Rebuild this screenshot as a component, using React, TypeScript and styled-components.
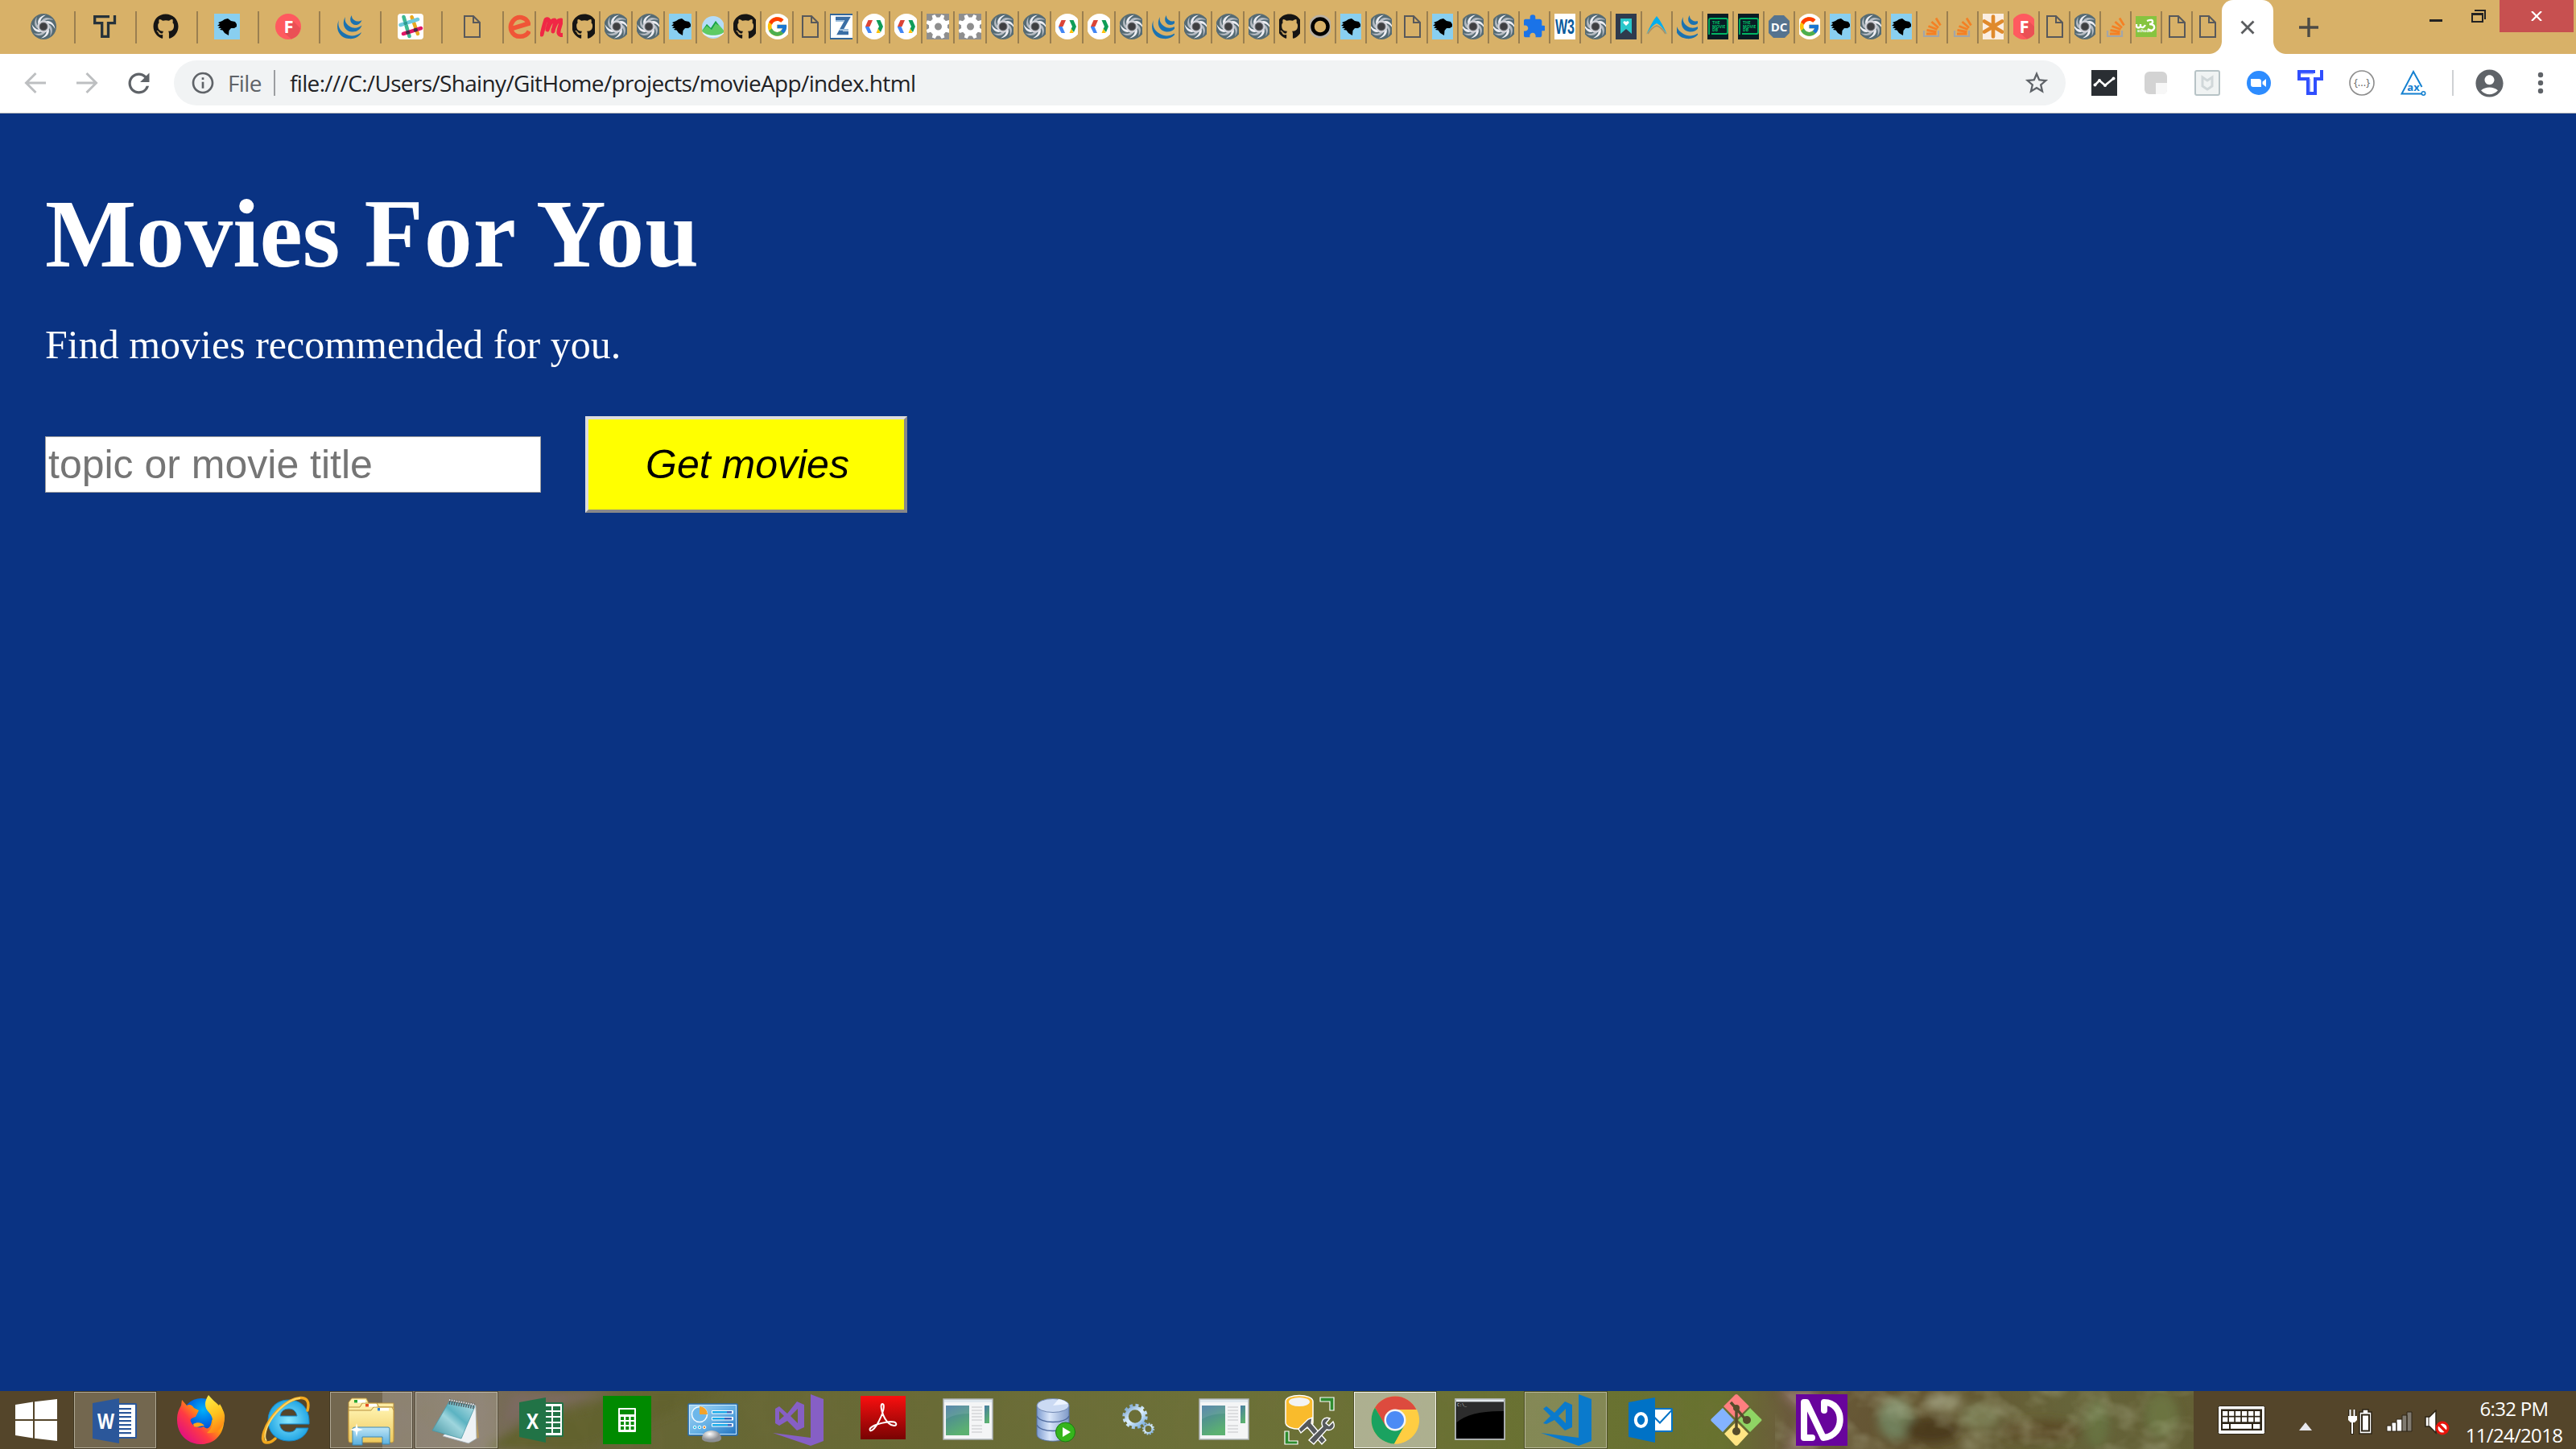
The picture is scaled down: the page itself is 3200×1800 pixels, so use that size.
import React from 'react';
import styled, { createGlobalStyle } from 'styled-components';
import { FaGithub } from 'react-icons/fa';
import { FcGoogle } from 'react-icons/fc';
import { MdExtension, MdRefresh, MdStarBorder, MdInfoOutline, MdAccountCircle } from 'react-icons/md';

const GlobalStyle = createGlobalStyle`
  html, body { margin: 0; padding: 0; background: #0a3383; overflow: hidden; }
  * { box-sizing: border-box; }
  svg { display: block; flex: none; }
`;

const uiFont = `'Open Sans', 'Noto Sans', sans-serif`;

const Screen = styled.div`
  width: 3200px;
  height: 1800px;
  display: flex;
  flex-direction: column;
  font-family: ${uiFont};
`;

/* ---------- tab strip ---------- */

const TabStrip = styled.header`
  height: 67px;
  flex: none;
  display: flex;
  align-items: flex-start;
  background: #d8b168;
  padding-left: 18px;
`;

const Tab = styled.div<{ $w: number; $pad: number; $last?: boolean }>`
  width: ${p => p.$w}px;
  height: 40px;
  margin-top: 14px;
  padding: 3px 0 0 ${p => p.$pad}px;
  flex: none;
  border-right: ${p => (p.$last ? 0 : 2)}px solid #9a7f50;
`;

const Favicon = styled.div<{ $w: number; $shift: number }>`
  width: ${p => p.$w}px;
  height: 32px;
  overflow: hidden;
  > svg { margin-left: ${p => -p.$shift}px; }
`;

const ActiveTab = styled.div`
  position: relative;
  width: 64px;
  height: 67px;
  flex: none;
  background: #fff;
  border-radius: 14px 14px 0 0;
  display: flex;
  align-items: center;
  justify-content: center;
  &::before, &::after {
    content: '';
    position: absolute;
    bottom: 0;
    width: 16px;
    height: 16px;
  }
  &::before { left: -16px; background: radial-gradient(circle at 0 0, transparent 15.5px, #fff 16.5px); }
  &::after { right: -16px; background: radial-gradient(circle at 100% 0, transparent 15.5px, #fff 16.5px); }
`;

const NewTab = styled.div`
  width: 88px;
  height: 67px;
  display: flex;
  align-items: center;
  justify-content: center;
`;

const WindowControls = styled.div`
  margin-left: auto;
  display: flex;
  align-items: flex-start;
  padding-right: 3px;
`;

const Control = styled.div<{ $w: number; $close?: boolean }>`
  width: ${p => p.$w}px;
  height: 40px;
  display: flex;
  align-items: center;
  justify-content: center;
  background: ${p => (p.$close ? '#c75050' : 'transparent')};
`;

/* ---------- toolbar ---------- */

const Toolbar = styled.nav`
  height: 74px;
  flex: none;
  display: flex;
  align-items: flex-start;
  background: #fff;
  border-bottom: 1px solid #b4b6ba;
  padding: 8px 0 0 12px;
`;

const ToolButton = styled.div<{ $w?: number }>`
  width: ${p => p.$w ?? 64}px;
  height: 56px;
  flex: none;
  display: flex;
  align-items: center;
  justify-content: center;
  color: #5f6368;
`;

const Omnibox = styled.div`
  width: 2350px;
  height: 56px;
  margin-left: 12px;
  border-radius: 28px;
  background: #f1f3f4;
  display: flex;
  align-items: center;
  padding: 0 19px 0 20px;
  color: #5f6368;
  font-size: 28px;
`;

const Scheme = styled.span`
  width: 57px;
  margin-left: 15px;
  letter-spacing: -0.6px;
`;

const Divider = styled.span<{ $color?: string }>`
  width: 2px;
  height: 32px;
  background: ${p => p.$color ?? '#9c9ea1'};
`;

const Address = styled.span`
  margin-left: 18px;
  flex: 1;
  color: #202124;
  letter-spacing: -0.66px;
`;

const Extensions = styled.div`
  display: flex;
  align-items: center;
  height: 56px;
  padding-left: 16px;
`;

/* ---------- page ---------- */

const Page = styled.main`
  flex: 1;
  background: #0a3383;
  color: #fff;
  padding: 80px 56px 0;
  font-family: 'Liberation Serif', 'Times New Roman', serif;
`;

const Title = styled.h1`
  margin: 0;
  font-size: 120px;
  line-height: 140px;
  font-weight: bold;
`;

const TitleTail = styled.span`
  letter-spacing: 0.9px;
`;

const Lead = styled.p`
  margin: 38px 0 60px;
  font-size: 50px;
  line-height: 58px;
`;

const SearchForm = styled.div`
  display: flex;
  align-items: center;
  gap: 55px;
`;

const SearchInput = styled.input`
  width: 616px;
  height: 70px;
  border: 1px solid #a0a0a0;
  border-radius: 0;
  padding: 0 3px;
  background: #fff;
  font: 50px 'Liberation Sans', Arial, sans-serif;
  outline: none;
  &::placeholder { color: #757575; opacity: 1; }
`;

const SearchButton = styled.button`
  width: 400px;
  height: 120px;
  padding: 0 0 0 3px;
  border: 4px solid;
  border-color: #dddddd #888888 #888888 #dddddd;
  border-radius: 0;
  background: #ffff00;
  color: #000;
  font: italic 50px 'Liberation Sans', Arial, sans-serif;
`;

/* ---------- taskbar ---------- */

const TaskbarRoot = styled.footer`
  position: relative;
  height: 72px;
  flex: none;
  display: flex;
  background: #54452a;
`;

const Wallpaper = styled.div`
  position: absolute;
  left: 475px;
  top: 0;
`;

const StartButton = styled.div`
  position: relative;
  width: 90px;
  display: flex;
  align-items: center;
  justify-content: center;
  margin-right: 2px;
`;

const TaskList = styled.div`
  position: relative;
  display: flex;
  gap: 4px;
  padding-top: 1px;
`;

const TaskButton = styled.div<{ $state?: 'open' | 'front' }>`
  width: 102px;
  height: 70px;
  display: flex;
  align-items: center;
  justify-content: center;
  border: 1px solid ${p => (p.$state === 'front' ? '#f2f2e8' : p.$state ? 'rgba(225,222,205,.55)' : 'transparent')};
  background: ${p => (p.$state === 'front' ? 'rgba(215,215,200,.62)' : p.$state ? 'rgba(220,215,205,.23)' : 'transparent')};
  box-shadow: ${p => (p.$state ? '0 0 0 1px rgba(40,35,20,.45)' : 'none')};
`;

const Tray = styled.div`
  position: relative;
  margin-left: auto;
  width: 475px;
  display: flex;
  align-items: center;
  padding-left: 30px;
  color: #fff;
`;

const TrayItem = styled.div<{ $w: number; $gap: number; $drop?: number }>`
  width: ${p => p.$w}px;
  margin-right: ${p => p.$gap}px;
  padding-top: ${p => p.$drop ?? 0}px;
`;

const Clock = styled.div`
  width: 140px;
  text-align: center;
  font-size: 24px;
  line-height: 33px;
  letter-spacing: -0.7px;
  padding-top: 4px;
`;

/* ---------- favicons, drawn on a 32 grid ---------- */

const Box32 = ({ children }: { children: React.ReactNode }) => (
  <svg width="32" height="32" viewBox="0 0 32 32">{children}</svg>
);

const Swirl = () => (
  <Box32>
    <circle cx="16" cy="16" r="16" fill="#566b74" />
    {[0, 45, 90, 135, 180, 225, 270, 315].map(a => (
      <path key={a} transform={`rotate(${a} 16 16)`} d="M10.500 15C7 10 10 3 19 1.500C14 4.500 11 8.500 13 12Z" fill={a % 90 ? '#b4bac1' : '#efeff4'} />
    ))}
    <circle cx="16" cy="16" r="6.200" fill="none" stroke="#d5d6dd" strokeWidth="2.400" />
    <circle cx="16" cy="16" r="5" fill="#3f3f42" stroke="#777b80" strokeWidth="1" />
  </Box32>
);

const TLogo = ({ color = '#26323a' }: { color?: string }) => (
  <Box32>
    <path d="M22 3.700H3.700V13M2 11.700H12.700V28.300H20.500V11.700H28.500V2" fill="none" stroke={color} strokeWidth="3.300" />
  </Box32>
);

const GitHub = () => <FaGithub size={32} color="#161514" />;

const Lion = () => (
  <Box32>
    <rect width="32" height="32" fill="#89cff0" />
    <path d="M5 11L10 9L13 7L17 6L21 9L26 10L28 13L28 16L25 18L21 18L18.500 21L18 27L13 24L10.500 20.500L7 20L9 18L5 18L7.500 15.500L4 15L7 12.500Z" fill="#000" />
  </Box32>
);

const FLogo = () => (
  <Box32>
    <circle cx="16" cy="16" r="16" fill="#ff5a5f" />
    <path d="M21 8L31 18A16 16 0 0 1 20 31.500L11 24Z" fill="#ea5055" />
    <text x="16.500" y="24" textAnchor="middle" fontFamily="Open Sans, sans-serif" fontWeight="700" fontSize="22" fill="#fff">F</text>
  </Box32>
);

const JQuery = () => (
  <Box32>
    <g fill="#1b72b0">
      <path d="M3 8C-2 18 3 30 15 31C23 32 29 28 31 23C25 28 17 29 11 25C4 21 1 15 3 8Z" />
      <path d="M11 4C6 12 10 22 19 22.500C26 23 30 19 31.500 14.500C27 18 21 19 16 15.500C11 12 10 8 11 4Z" />
      <path d="M19 2C15 7 18 14 24 14C28 14 30 11.500 31.500 8C28 10 25 10 22 8C19 6 19 4 19 2Z" />
    </g>
  </Box32>
);

const Slack = () => (
  <Box32>
    <rect width="32" height="32" rx="4" fill="#fff" />
    <g fill="none" strokeWidth="4.500" strokeLinecap="round">
      <path d="M7.500 4L14.500 28" stroke="#3eb991" />
      <path d="M17.500 4L25 25" stroke="#e9a820" />
      <path d="M3.500 14L25 7" stroke="#6ecadc" />
      <path d="M7 25L29 18" stroke="#e01765" />
      <path d="M12.400 23.300L13 23.100M22 20.200L22.600 20" stroke="#472a49" />
      <path d="M9.500 12L10 11.800" stroke="#2d9c8f" />
    </g>
  </Box32>
);

const FileIcon = () => (
  <Box32>
    <path d="M7 3H18L26 11V29H7ZM18 3V11H26" fill="none" stroke="#58595b" strokeWidth="2" />
  </Box32>
);

const ELogo = () => (
  <Box32>
    <path d="M4 19L27 12C24 3 13 1 7 8C0 17 5 29 16 29C22 29 26 26 28 22" fill="none" stroke="#f05537" strokeWidth="6" transform="translate(1 1) scale(.94)" />
  </Box32>
);

const MLogo = () => (
  <Box32>
    <path d="M3 26C5 18 6 13 8 7.500C10 6 13 7 12 12L10 19M10 20C13 12 15 8 19 8C21 10 18 15 17 22M17 20C20 12 23 7 27 8C28 12 23 19 24 24C25 27 28 27 30 26" fill="none" stroke="#f02745" strokeWidth="5" strokeLinecap="round" strokeLinejoin="round" />
  </Box32>
);

const Basecamp = () => (
  <Box32>
    <circle cx="16" cy="17" r="14" fill="#b4dcf8" />
    <path d="M2 21L8 13L13 18L19 9L30 22C27 28 6 29 2 21Z" fill="#5ecb63" />
    <path d="M8 13L13 18L19 9L23 15L19 12L14 20L8 15L3 21" fill="#14a04a" />
    <path d="M2 22C7 29 26 29 30 22C29 31 4 32 2 22Z" fill="#e8f6ff" />
  </Box32>
);

const Google = () => (
  <Box32>
    <circle cx="16" cy="16" r="16" fill="#fff" />
    <g transform="translate(1.500 2)"><FcGoogle size={28} /></g>
  </Box32>
);

const ZLogo = () => (
  <Box32>
    <rect x="1" y="1" width="30" height="30" fill="#fff" stroke="#336699" strokeWidth="2" />
    <path d="M8 6H23L13 24H24" fill="none" stroke="#3a6ea5" strokeWidth="4.500" />
    <path d="M8 9H18M13 20H24" stroke="#9fc0df" strokeWidth="2" />
  </Box32>
);

const DevLogo = () => (
  <Box32>
    <circle cx="16" cy="16" r="16" fill="#fff" />
    <path d="M8.500 8H14L10.500 16H5Z" fill="#db4437" />
    <path d="M5 16H9.500L13 24H8.500L5 17Z" fill="#4285f4" />
    <path d="M18.500 8H23.500L27 16L24 23L20.500 19L22 16Z" fill="#0f9d58" />
    <path d="M18.500 24L20.800 18.500L23.700 24Z" fill="#ffc107" />
  </Box32>
);

const GearBox = () => (
  <Box32>
    <rect width="32" height="32" fill="#8e8e8e" />
    <circle cx="15.500" cy="16" r="8" fill="none" stroke="#fff" strokeWidth="7" />
    {[0, 45, 90, 135, 180, 225, 270, 315].map(a => (
      <path key={a} d="M12.500 7L13.500 .5H17.500L18.500 7Z" fill="#fff" transform={`rotate(${a + 22} 15.500 16)`} />
    ))}
  </Box32>
);

const Ring = () => (
  <Box32>
    <circle cx="16" cy="16" r="12.500" fill="none" stroke="#b9b0a2" strokeWidth="4" />
    <circle cx="16" cy="16" r="9.500" fill="none" stroke="#000" strokeWidth="4.500" />
  </Box32>
);

const Puzzle = () => <MdExtension size={32} color="#1a73e8" />;

const W3 = () => (
  <Box32>
    <rect width="32" height="32" fill="#fff" />
    <text x="4" y="25" fontFamily="Liberation Sans, sans-serif" fontWeight="700" fontSize="25" textLength="24" lengthAdjust="spacingAndGlyphs" fill="#0a5a9c">W3</text>
  </Box32>
);

const Bookmark = () => (
  <Box32>
    <rect width="32" height="32" fill="#2f3a4d" />
    <path d="M9 6H23V25L16 19L9 25Z" fill="#29c7cb" />
    <path d="M16 15L12.500 11.500C12 9 15 8.500 16 10.500C17 8.500 20 9 19.500 11.500Z" fill="#fff" />
  </Box32>
);

const Caret = () => (
  <Box32>
    <path d="M3 26C7 17 11 9 16 3C21 9 25 17 29 26C25 20 21 14 16 12C11 14 7 20 3 26Z" fill="#00aef0" />
    <path d="M5 25C9 19 12 16 16 15C20 16 23 19 27 25" fill="none" stroke="#a38f6c" strokeWidth="1.500" />
  </Box32>
);

const MovieDb = () => (
  <Box32>
    <rect width="32" height="32" fill="#081c24" />
    <path d="M5 20V8Q5 6 7 6H26Q28 6 28 8V23Q28 25 26 25H8M5 20V26" fill="none" stroke="#01b463" strokeWidth="1.800" />
    <g fontFamily="Open Sans, sans-serif" fontWeight="700" fontSize="5" fill="#01c46a">
      <text x="9" y="13">THE</text>
      <text x="9" y="17.500">MOVIE</text>
      <text x="9" y="22">DB</text>
    </g>
  </Box32>
);

const DcLogo = () => (
  <Box32>
    <path d="M10 2H22L29 9V24L23 30H9L3 24V9Z" fill="#55738f" />
    <text x="16" y="22" textAnchor="middle" fontFamily="Open Sans, sans-serif" fontWeight="700" fontSize="15" fill="#fff">DC</text>
  </Box32>
);

const StackOverflow = () => (
  <Box32>
    <path d="M6 21V28H24V21" fill="none" stroke="#a3a5a8" strokeWidth="2.200" />
    <path d="M9 25H21.500M9.500 20.500L21.500 22.500M11.500 15.500L22.500 19.500M15.500 10L24 17.500M21 5.500L26.500 14.500" stroke="#f48024" strokeWidth="2.800" />
  </Box32>
);

const Asterisk = () => (
  <Box32>
    <rect width="32" height="32" fill="#fbeee2" />
    <path d="M16 3.500V28.500M5 9.500L27 22.500M27 9.500L5 22.500" stroke="#e08a2c" strokeWidth="4.600" strokeLinecap="round" />
    <circle cx="16" cy="16" r="4" fill="#e08a2c" />
  </Box32>
);

const W3Schools = () => (
  <Box32>
    <rect x="3" y="3" width="26" height="26" fill="#86c440" />
    <path d="M4 13V16Q6 19 9 16V13M9 16Q12 19 15 14M17 9Q25 6 24 11Q23 13 20 13Q27 13 26 18Q24 23 18 19" fill="none" stroke="#fff" strokeWidth="2.400" />
    <text x="5" y="23" fontFamily="Open Sans, sans-serif" fontSize="5" fontWeight="700" fill="#fff">schools</text>
  </Box32>
);

const icons = {
  swirl: Swirl, t: TLogo, gh: GitHub, lion: Lion, f: FLogo, jq: JQuery, slack: Slack, file: FileIcon,
  e: ELogo, m: MLogo, base: Basecamp, g: Google, z: ZLogo, dev: DevLogo, gear: GearBox, ring: Ring,
  puzzle: Puzzle, w3: W3, book: Bookmark, caret: Caret, tmdb: MovieDb, dc: DcLogo, so: StackOverflow,
  ast: Asterisk, w3s: W3Schools,
};
type IconName = keyof typeof icons;

const wideTabs: IconName[] = ['swirl', 't', 'gh', 'lion', 'f', 'jq', 'slack', 'file'];
const narrowTabs: IconName[] = ['e', 'm', 'gh', 'swirl', 'swirl', 'lion', 'base', 'gh', 'g', 'file', 'z', 'dev', 'dev',
  'gear', 'gear', 'swirl', 'swirl', 'dev', 'dev', 'swirl', 'jq', 'swirl', 'swirl'];
const tinyTabs: IconName[] = ['swirl', 'gh', 'ring', 'lion', 'swirl', 'file', 'lion', 'swirl', 'swirl', 'puzzle', 'w3',
  'swirl', 'book', 'caret', 'jq', 'tmdb', 'tmdb', 'dc', 'g', 'lion', 'swirl', 'lion', 'so', 'so', 'ast', 'f', 'file',
  'swirl', 'so', 'w3s', 'file', 'file'];

const TabGroup = ({ names, w, pad, icon, shift, end }: {
  names: IconName[]; w: number; pad: number; icon: number; shift: number; end?: boolean;
}) => (
  <>
    {names.map((n, i) => {
      const Icon = icons[n];
      const last = end && i === names.length - 1;
      return (
        <Tab key={i} $w={last ? w - 2 : w} $pad={pad} $last={last}>
          <Favicon $w={icon} $shift={shift}><Icon /></Favicon>
        </Tab>
      );
    })}
  </>
);

/* ---------- toolbar extension icons ---------- */

const ChartExt = () => (
  <Box32>
    <rect width="32" height="32" fill="#2a2e33" />
    <path d="M4 19L10 13L17 19L28 10" fill="none" stroke="#fff" strokeWidth="2.500" />
    <g fill="#fff"><circle cx="4.500" cy="18.500" r="2" /><circle cx="10" cy="13" r="2" /><circle cx="17" cy="19" r="2" /><circle cx="27.500" cy="10.500" r="2" /></g>
  </Box32>
);
const NoteExt = () => (
  <Box32>
    <rect x="2" y="2" width="28" height="28" rx="6" fill="#d3d3d3" />
    <path d="M16 16H30V25Q30 30 25 30H16Z" fill="#f7f7f7" />
  </Box32>
);
const ShieldExt = () => (
  <Box32>
    <rect x="1" y="1" width="30" height="30" rx="2" fill="#f0f3f3" stroke="#b7c3c6" strokeWidth="2" />
    <path d="M10 9L16 13L22 9V20L16 24L10 20Z" fill="none" stroke="#d0d7d9" strokeWidth="3" />
  </Box32>
);
const CameraExt = () => (
  <Box32>
    <circle cx="16" cy="16" r="15" fill="#2d8cff" />
    <path d="M6 11H16Q19 11 19 14V21H9Q6 21 6 18ZM20.500 14.500L25 11V21L20.500 17.500Z" fill="#fff" />
  </Box32>
);
const TypeExt = () => (
  <Box32>
    <path d="M22 2H2V11H13V29H22V11H30V0" fill="none" stroke="#304ffe" strokeWidth="4" />
    <path d="M4 4.500H20M15.500 11V27" stroke="#a3b1ff" strokeWidth="1.500" />
  </Box32>
);
const BracesExt = () => (
  <Box32>
    <circle cx="16" cy="16" r="15" fill="#fff" stroke="#8c8c8c" strokeWidth="1.600" />
    <text x="6" y="20" fontFamily="Open Sans, sans-serif" fontSize="13" textLength="20" fill="#666">{'{...}'}</text>
  </Box32>
);
const AxExt = () => (
  <Box32>
    <path d="M26.500 21L16 2L1.500 29.500H26" fill="none" stroke="#1480d0" strokeWidth="2" />
    <circle cx="28.500" cy="29" r="2.200" fill="#fff" stroke="#1480d0" strokeWidth="1.600" />
    <text x="16" y="26" textAnchor="middle" fontFamily="Open Sans, sans-serif" fontWeight="700" fontSize="13" fill="#1480d0">ax</text>
  </Box32>
);

/* ---------- taskbar icons, drawn on a 64 grid ---------- */

const Box64 = ({ children }: { children: React.ReactNode }) => (
  <svg width="64" height="64" viewBox="0 0 64 64">{children}</svg>
);

const Letter = ({ c, w }: { c: string; w: number }) => (
  <text x={20.5 - w / 2} y="43" fontFamily="Open Sans, sans-serif" fontWeight="700" fontSize="26" textLength={w} lengthAdjust="spacingAndGlyphs" fill="#fff">{c}</text>
);

const Word = () => (
  <Box64>
    <rect x="34" y="11" width="25" height="44" rx="1.500" fill="#2b579a" />
    <rect x="36" y="13" width="21" height="40" fill="#fff" />
    {[17, 22, 27, 32, 37, 42, 47].map(y => <rect key={y} x="36" y={y} width="16" height="2.200" fill="#2b579a" />)}
    <path d="M4 11L37 5V61L4 55Z" fill="#2b579a" />
    <Letter c="W" w={21} />
  </Box64>
);

const Firefox = () => (
  <Box64>
    <defs>
      <linearGradient id="ffBody" x1="0.9" y1="0.1" x2="0.15" y2="0.8">
        <stop offset="0" stopColor="#ffd52e" /><stop offset=".4" stopColor="#ff9a0d" /><stop offset=".68" stopColor="#ff3b42" /><stop offset="1" stopColor="#e5157a" />
      </linearGradient>
      <radialGradient id="ffGlobe" cx=".55" cy=".3" r=".7"><stop offset="0" stopColor="#00b2fb" /><stop offset=".6" stopColor="#0060df" /><stop offset="1" stopColor="#321c80" /></radialGradient>
      <linearGradient id="ffTail" x1="0" y1="0" x2="0.3" y2="1"><stop offset="0" stopColor="#fff14a" /><stop offset=".6" stopColor="#ffc21e" /><stop offset="1" stopColor="#ff8a16" /></linearGradient>
    </defs>
    <circle cx="33" cy="29" r="24" fill="url(#ffGlobe)" />
    <path d="M9 7L15 14Q20 11 24 17L30 20L26 28Q18 30 20 34C24 43 33 42 36 40C40 45 45 42 46 33L56 12C63 22 63 36 58 47C52 58 43 62 32 62C15 62 3 49 3 32C3 22 6 18 8 14Z" fill="url(#ffBody)" />
    <path d="M42 1C36 10 37 17 43 23C50 31 48 42 40 48C55 50 63 39 62 26C61 16 51 12 42 1Z" fill="url(#ffTail)" />
    <path d="M23 37C28 34 34 35 37 39C31 39 29 42 24 40Z" fill="#ffa41b" />
  </Box64>
);

const Explorer = () => (
  <Box64>
    <defs><radialGradient id="ie"><stop offset="0" stopColor="#8be9ff" /><stop offset="1" stopColor="#25a7e4" /></radialGradient></defs>
    <path d="M36 7C20 7 10 18 10 33C10 48 21 58 36 58C48 58 57 52 60 42H45C43 46 40 47 36 47C29 47 25 43 24.500 37H61C62 19 52 7 36 7ZM25 27C26 21 30 18 36 18C42 18 45 22 46 27Z" fill="url(#ie)" stroke="#1787c9" strokeWidth="1" />
    <path d="M59 20C65 -3 41 2 23 19C6 36 -3 61 9 60C12 60 16 58 19 55" fill="none" stroke="#f2a81d" strokeWidth="3.400" strokeLinecap="round" />
    <path d="M50 5C37 5 22 19 14 31C7 42 4 54 8 58" fill="none" stroke="#ffd768" strokeWidth="2" />
  </Box64>
);

const Folders = () => (
  <Box64>
    <defs>
      <linearGradient id="fold" x1="0" y1="0" x2="0" y2="1"><stop offset="0" stopColor="#fff3b0" /><stop offset="1" stopColor="#eec95d" /></linearGradient>
      <linearGradient id="foldBase" x1="0" y1="0" x2="0" y2="1"><stop offset="0" stopColor="#bfe6f6" /><stop offset="1" stopColor="#58aede" /></linearGradient>
    </defs>
    <g fill="url(#fold)" stroke="#b78f3c" strokeWidth="1">
      <path d="M4 10L8 5H26L29 11H60V54H4Z" />
      <path d="M4 16H18L21 11H39L42 16H60V56H4Z" />
      <path d="M4 20H32L35 16H58L60 20V58Q60 60 58 60H6Q4 60 4 58Z" />
    </g>
    <rect x="11" y="7" width="14" height="3.500" fill="#fff" /><rect x="11" y="7" width="4" height="3.500" fill="#29a52f" />
    <rect x="25" y="12" width="14" height="3.500" fill="#fff" /><rect x="25" y="12" width="4" height="3.500" fill="#e8501f" />
    <rect x="40" y="17" width="14" height="3.500" fill="#fff" /><rect x="40" y="17" width="3" height="3.500" fill="#3284d8" />
    <path d="M9 63V43Q9 41 12 41H53Q55 41 55 43V62H46V53H21V63Z" fill="url(#foldBase)" stroke="#3d88b5" strokeWidth="1" />
    <path d="M14 36L15.500 42L22 44L15.500 46L14 53L12.500 46L6 44L12.500 42Z" fill="#fff" />
  </Box64>
);

const Notepad = () => (
  <Box64>
    <defs><linearGradient id="pad" x1="0" y1="1" x2="1" y2="0"><stop offset="0" stopColor="#3d8e9c" /><stop offset=".45" stopColor="#9ed5dd" /><stop offset=".6" stopColor="#5cb3c2" /><stop offset="1" stopColor="#bfe4ea" /></linearGradient></defs>
    <path d="M56 14L60 54L54 56Z" fill="#b79a5e" />
    <path d="M50 12L56 14L57 55L47 61L15 52L20 46Z" fill="#eef2f5" stroke="#9fabb3" strokeWidth=".8" />
    <path d="M23 9L55 15L38 55L2 45Z" fill="url(#pad)" stroke="#4a98a6" strokeWidth=".8" />
    <path d="M23 9L55 15" stroke="#4c5a60" strokeWidth="7" strokeDasharray="1.500 1.500" />
    <path d="M23 7L55 13" stroke="#dfe5e8" strokeWidth="2" strokeDasharray="1.500 1.500" />
  </Box64>
);

const Excel = () => (
  <Box64>
    <rect x="34" y="10" width="25" height="43" rx="1.500" fill="#217346" />
    <rect x="36" y="12" width="21" height="39" fill="#fff" />
    {[15, 22, 29, 36, 43].map(y => (
      <g key={y} fill="#217346"><rect x="37" y={y} width="7" height="5" /><rect x="46" y={y} width="9" height="5" /></g>
    ))}
    <path d="M4 10L37 4V60L4 53Z" fill="#217346" />
    <Letter c="X" w={15} />
  </Box64>
);

const Calculator = () => (
  <Box64>
    <rect x="2" y="2" width="60" height="60" fill="#008a00" />
    <rect x="21" y="17" width="22" height="30" rx="1" fill="#fff" />
    <rect x="23" y="19" width="18" height="6" fill="#008a00" />
    {[28, 34, 40].map(y => [24, 30.300, 36.600].map(x => <rect key={`${x}${y}`} x={x} y={y} width="4" height="4" fill="#008a00" />))}
  </Box64>
);

const ControlPanel = () => (
  <Box64>
    <defs>
      <linearGradient id="cp" x1="0" y1="0" x2="1" y2="1"><stop offset="0" stopColor="#a8d8f6" /><stop offset=".55" stopColor="#62aee4" /><stop offset="1" stopColor="#1f6fbd" /></linearGradient>
      <radialGradient id="knob" cx=".4" cy=".3"><stop offset="0" stopColor="#fff" /><stop offset="1" stopColor="#8d9094" /></radialGradient>
    </defs>
    <rect x="2" y="12" width="61" height="39" rx="1" fill="url(#cp)" stroke="#2c6fae" strokeWidth="1.500" />
    <rect x="3.500" y="13.500" width="58" height="36" fill="none" stroke="#cbeaff" strokeWidth="1" />
    <circle cx="16" cy="25" r="9.500" fill="#6db7ea" stroke="#f2faff" strokeWidth="1.500" />
    <path d="M16 25V15A10 10 0 0 1 26 25Z" fill="#f2a32c" />
    {[20, 28, 36].map((y, i) => (
      <g key={y}><rect x="31" y={y} width="27" height="4.500" rx="1" fill="#fff" /><rect x="32" y={y + 1} width={[18, 15, 19][i]} height="2.500" fill="#16a8e8" /><rect x={[50, 47, 51][i]} y={y + 1} width={[6, 9, 5][i]} height="2.500" fill="#3a62b8" /></g>
    ))}
    <g stroke="#fff" strokeWidth="1"><circle cx="10" cy="41" r="1.800" fill="#23c4ea" /><circle cx="16" cy="41" r="1.800" fill="#23c4ea" /><circle cx="22" cy="41" r="1.800" fill="#ee8b25" /></g>
    <path d="M19 55C19 48 25 45 31 45C38 45 43 49 43 55C43 61 19 61 19 55Z" fill="url(#knob)" />
  </Box64>
);

const VisualStudio = () => (
  <Box64>
    <path fillRule="evenodd" d="M48 0L64 6V58L48 64L1 48L48 54ZM4 18L9 15L19 24L31 9L40 13V41L31 45L19 33L9 39L4 36ZM9 21V32L15 27ZM32 18L23 27L32 36Z" fill="#865fc5" />
  </Box64>
);

const Code = () => (
  <Box64>
    <path fillRule="evenodd" d="M48 0L64 6V58L48 64L1 48L48 54ZM4 18L8 15L18 23L31 9L40 13V41L31 45L18 32L8 37L4 36L13 27ZM32 18L23 27L32 36Z" fill="#0a7acc" />
  </Box64>
);

const Acrobat = () => (
  <Box64>
    <defs><linearGradient id="pdf" x1="0" y1="0" x2="0" y2="1"><stop offset="0" stopColor="#fa0f0f" /><stop offset="1" stopColor="#780303" /></linearGradient></defs>
    <rect x="4" y="2" width="56" height="54" fill="url(#pdf)" />
    <path d="M31 12C35 12 32 24 27 33C22 43 16 48 15.500 44C15 38 44 31 48 36C50 40 43 40 39 36C32 30 27 13 31 12Z" fill="none" stroke="#fff" strokeWidth="2" />
  </Box64>
);

const AppWindow = () => (
  <Box64>
    <defs><linearGradient id="app" x1="0" y1="0" x2=".4" y2="1"><stop offset="0" stopColor="#477aa4" /><stop offset="1" stopColor="#5cb171" /></linearGradient></defs>
    <rect x="1" y="6" width="61" height="50" fill="#f4f5f6" stroke="#aeb4b8" strokeWidth="1.500" />
    <rect x="2" y="7" width="59" height="3" fill="#dfe8ee" />
    <rect x="4" y="14" width="29" height="37" fill="url(#app)" />
    <path d="M4 31Q15 24 33 24V14H4Z" fill="#fff" opacity=".1" />
    {[15, 19, 23, 27, 31, 38, 42, 46].map(y => <rect key={y} x="36" y={y} width="13" height="2" fill="#dcdddf" />)}
    <rect x="52" y="14" width="6" height="22" fill="url(#app)" />
  </Box64>
);

const Database = () => (
  <Box64>
    <defs><linearGradient id="db"><stop offset="0" stopColor="#7c9bd0" /><stop offset=".4" stopColor="#d9e6fa" /><stop offset="1" stopColor="#7d98c7" /></linearGradient></defs>
    <path d="M11 14V50C11 61 51 61 51 50V14Z" fill="url(#db)" stroke="#56719f" strokeWidth="1" />
    <path d="M11 27C15 37 47 37 51 27M11 38C15 48 47 48 51 38" fill="none" stroke="#4e699c" strokeWidth="1.500" />
    <ellipse cx="31" cy="14" rx="20" ry="8.500" fill="#cbdaf3" stroke="#7289b3" strokeWidth="1" />
    <path d="M31 14L38 6Q46 7 50 12Z" fill="#edf4ff" />
    <circle cx="46.500" cy="47" r="12" fill="#35b51c" stroke="#1b7b10" strokeWidth="1" />
    <path d="M43 41V53L53 47Z" fill="#fff" />
  </Box64>
);

const Cog = ({ cx, cy, r, id }: { cx: number; cy: number; r: number; id: string }) => (
  <g transform={`translate(${cx} ${cy}) scale(${r / 10})`} stroke={`url(#${id})`} fill="none">
    <defs><linearGradient id={id} gradientUnits="userSpaceOnUse" x1="-8" y1="-10" x2="8" y2="10"><stop offset="0" stopColor="#6292c4" /><stop offset=".5" stopColor="#dff2ff" /><stop offset="1" stopColor="#5f9bd6" /></linearGradient></defs>
    <circle r="6.800" strokeWidth="3" />
    <circle r="9" strokeWidth="2.200" strokeDasharray="2.600 2.112" />
  </g>
);
const Gears = () => <Box64><Cog cx={27} cy={27.500} r={15.500} id="cogA" /><Cog cx={43.500} cy={43} r={7.500} id="cogB" /></Box64>;

const DbTools = () => (
  <Box64>
    <path d="M45 4H62V20H57V9H45ZM1 46H6V58H17V62H1Z" fill="#2e8b2e" stroke="#fff" strokeWidth="1.200" />
    <path d="M2 9C2 -1 36 -1 36 9V35C36 46 2 46 2 35Z" fill="#f9bb2c" stroke="#fff" strokeWidth="1.500" />
    <ellipse cx="19" cy="9.500" rx="13" ry="5.500" fill="#f3f3f3" />
    <g stroke="#fff" strokeWidth="1.400" fill="#55585a">
      <path d="M18 43L30 31L35 29L34 36L52 57L47 62L29 41L21 48Z" />
      <path d="M61 34L56 39L52 36L57 30C49 27 45 34 48 40L31 57L37 62L53 44C59 46 65 41 61 34Z" />
    </g>
  </Box64>
);

const Chrome = () => (
  <Box64>
    <circle cx="32" cy="32" r="29.500" fill="#ffcd42" />
    <path d="M32 2.500A29.500 29.500 0 0 0 7 16.500L20 40L32 19H58.500A29.500 29.500 0 0 0 32 2.500Z" fill="#dd4b3e" />
    <path d="M7 16.500A29.500 29.500 0 0 0 31 61.500L44 38L32 45Q24 45 20 39Z" fill="#1aa260" />
    <path d="M31 61.500A29.500 29.500 0 0 0 59 19H32L44 39Z" fill="#ffcd42" />
    <circle cx="32" cy="32" r="13.500" fill="#f4f4f4" />
    <circle cx="32" cy="32" r="11" fill="#4c8bf5" />
  </Box64>
);

const Console = () => (
  <Box64>
    <rect x="1" y="6" width="61" height="50" fill="#000" stroke="#b5babd" strokeWidth="1.800" />
    <rect x="2" y="6.500" width="59" height="3" fill="#e3e9ec" />
    <path d="M2.500 10H61V21Q20 20 2.500 35Z" fill="#2c2c2c" />
    <text x="3" y="15" fontFamily="Liberation Mono, monospace" fontSize="5" fill="#ddd">C:\_</text>
  </Box64>
);

const Outlook = () => (
  <Box64>
    <rect x="35" y="17" width="24" height="30" rx="1.500" fill="#0072c6" />
    <path d="M37 19H57L43 34L37 28ZM37 31L43 37L57 22V45H37Z" fill="#fff" />
    <path d="M4 10L37 4V60L4 53Z" fill="#0072c6" />
    <ellipse cx="19.500" cy="32" rx="6.700" ry="8" fill="none" stroke="#fff" strokeWidth="4" />
  </Box64>
);

const GitIcon = () => (
  <Box64>
    <path d="M29 2Q32 -2 35 2L48 15L32 31L16 15Z" fill="#ff7f80" />
    <path d="M15 17L29 32L15 47L1.500 34Q-1 32 1.500 30Z" fill="#84b3ff" />
    <path d="M49 17L62 30Q65 32 62 34L49 47L34 32Z" fill="#8fd464" />
    <path d="M32 34L47 49L35 62Q32 66 29 62L17 49Z" fill="#ffe583" />
    <path d="M25 10L32 18V44M33 19L43 31" stroke="#554c2b" strokeWidth="3.500" fill="none" />
    <g fill="#554c2b"><circle cx="32" cy="17" r="4" /><circle cx="32" cy="46" r="5" /><circle cx="45" cy="32" r="5" /></g>
  </Box64>
);

const NLogo = () => (
  <Box64>
    <rect width="64" height="64" fill="#68049c" />
    <path d="M20 54H10V10H13L34 54C62 52 61 10 35 10V20" fill="none" stroke="#fff" strokeWidth="8" strokeLinecap="round" strokeLinejoin="round" />
  </Box64>
);

const WindowsLogo = () => (
  <svg width="52" height="52" viewBox="0 0 52 52" fill="#fff">
    <path d="M0 7L22 3.500V25H0ZM24 3.200L52 0V25H24ZM0 27H22V48.500L0 45ZM24 27H52V52L24 48.800Z" />
  </svg>
);

const tasks: { icon: React.ReactNode; state?: 'open' | 'front' }[] = [
  { icon: <Word />, state: 'open' },
  { icon: <Firefox /> },
  { icon: <Explorer /> },
  { icon: <Folders />, state: 'open' },
  { icon: <Notepad />, state: 'open' },
  { icon: <Excel /> },
  { icon: <Calculator /> },
  { icon: <ControlPanel /> },
  { icon: <VisualStudio /> },
  { icon: <Acrobat /> },
  { icon: <AppWindow /> },
  { icon: <Database /> },
  { icon: <Gears /> },
  { icon: <AppWindow /> },
  { icon: <DbTools /> },
  { icon: <Chrome />, state: 'front' },
  { icon: <Console /> },
  { icon: <Code />, state: 'open' },
  { icon: <Outlook /> },
  { icon: <GitIcon /> },
  { icon: <NLogo /> },
];

/* blurred meadow that shows through the glass taskbar */
const Meadow = () => (
  <svg width="2250" height="72" viewBox="0 0 2250 72">
    <defs>
      <linearGradient id="meadow">
        <stop offset="0" stopColor="#746858" /><stop offset=".055" stopColor="#7b6e60" />
        <stop offset=".1" stopColor="#68633a" /><stop offset=".16" stopColor="#666634" />
        <stop offset=".45" stopColor="#6c7038" /><stop offset=".74" stopColor="#68722f" />
        <stop offset=".775" stopColor="#6a5a3c" /><stop offset=".85" stopColor="#62532f" />
        <stop offset=".93" stopColor="#66643a" /><stop offset="1" stopColor="#625e34" />
      </linearGradient>
      <filter id="soft" x="-20%" y="-50%" width="140%" height="200%"><feGaussianBlur stdDeviation="6" /></filter>
      <filter id="grass" x="0" y="0" width="100%" height="100%">
        <feTurbulence type="fractalNoise" baseFrequency=".035 .022" numOctaves="3" seed="7" />
        <feColorMatrix values="0 0 0 0 .18  0 0 0 0 .16  0 0 0 0 .05  2.2 0 0 0 -.85" />
      </filter>
      <filter id="leaves" x="0" y="0" width="100%" height="100%">
        <feTurbulence type="fractalNoise" baseFrequency=".022 .03" numOctaves="3" seed="12" />
        <feColorMatrix values="0 0 0 0 .52  0 0 0 0 .55  0 0 0 0 .36  0 2.6 0 0 -1.1" />
      </filter>
    </defs>
    <rect width="2250" height="72" fill="url(#meadow)" />
    <g filter="url(#soft)">
      <path d="M125 72L170 45L260 20L330 0H420L250 72Z" fill="#62622f" />
      <path d="M160 0H290L150 40Z" fill="#7b6a60" />
      <path d="M1735 0L1765 30L1745 72H1780V0Z" fill="#8d7168" />
      <ellipse cx="1880" cy="35" rx="22" ry="26" fill="#71805c" />
      <ellipse cx="1940" cy="14" rx="24" ry="12" fill="#8c8868" />
      <ellipse cx="1985" cy="32" rx="24" ry="16" fill="#7c7f57" />
      <ellipse cx="1925" cy="48" rx="34" ry="16" fill="#4c3a1d" />
      <ellipse cx="2060" cy="50" rx="50" ry="14" fill="#5c4b26" />
      <ellipse cx="2130" cy="40" rx="14" ry="30" fill="#667343" />
      <ellipse cx="2210" cy="30" rx="20" ry="28" fill="#6b7443" />
    </g>
    <rect width="2250" height="72" filter="url(#grass)" opacity=".18" />
    <g transform="translate(1730 0)"><rect width="520" height="72" filter="url(#leaves)" opacity=".35" /></g>
  </svg>
);

const Keyboard = () => (
  <svg width="59" height="36" viewBox="0 0 59 36">
    <rect x=".5" y=".5" width="58" height="35" rx="2" fill="#fff" stroke="#2c2416" />
    <rect x="4" y="4.500" width="51" height="26.500" fill="#2c2416" />
    {[7, 14.500].map(y => [6, 14, 22, 30, 38, 46].map(x => <rect key={`${x}-${y}`} x={x} y={y} width="6.300" height="5.800" fill="#fff" />))}
    <rect x="6" y="23" width="8" height="5.800" fill="#fff" /><rect x="16" y="23" width="26" height="5.800" fill="#fff" /><rect x="44" y="23" width="8.300" height="5.800" fill="#fff" />
  </svg>
);

const Power = () => (
  <svg width="32" height="32" viewBox="0 0 32 32">
    <path d="M3 1V9M9 1V9M6 15V32" stroke="#2c2416" strokeWidth="4" />
    <path d="M1 9H12V14L9 17H4L1 14Z" fill="#fff" />
    <path d="M3.500 1V9M8.500 1V9M6 15V31" stroke="#fff" strokeWidth="2" />
    <path d="M19 1H26V4H30V31H15V4H19Z" fill="#fff" stroke="#2c2416" strokeWidth="1.500" />
    <rect x="18" y="7.500" width="9" height="20" fill="#fff" stroke="#2c2416" strokeWidth="2" />
  </svg>
);

const Signal = () => (
  <svg width="33" height="26" viewBox="0 0 33 26" stroke="#2c2416" strokeWidth="1">
    <path d="M1 18H7V25H1ZM7 14H13V25H7ZM13 10H20V25H13Z" fill="#fff" />
    <path d="M20 5H26V25H20ZM26 1H32V25H26Z" fill="#807a70" />
  </svg>
);

const Volume = () => (
  <svg width="32" height="32" viewBox="0 0 32 32">
    <path d="M1 9H6L14 1V29L6 21H1Z" fill="#fff" stroke="#2c2416" strokeWidth="1.500" />
    <path d="M5 8V22" stroke="#2c2416" strokeWidth="1" />
    <circle cx="22" cy="23" r="7" fill="#fff" stroke="#e8140c" strokeWidth="3" />
    <path d="M17 18L27 28" stroke="#e8140c" strokeWidth="3.500" />
  </svg>
);

const Arrow = ({ flip }: { flip?: boolean }) => (
  <svg width="28" height="28" viewBox="0 0 28 28" fill="none" stroke="#bdbfc1" strokeWidth="3">
    <path transform={flip ? 'translate(28 0) scale(-1 1)' : undefined} d="M27 14H3M14.500 2L2.500 14L14.500 26" />
  </svg>
);

export default function App() {
  return (
    <Screen>
      <GlobalStyle />
      <TabStrip>
        <TabGroup names={wideTabs} w={76} pad={20} icon={32} shift={0} />
        <TabGroup names={narrowTabs} w={40} pad={5} icon={28} shift={1} />
        <TabGroup names={tinyTabs} w={38} pad={5} icon={26} shift={3} end />
        <ActiveTab>
          <svg width="18" height="18" viewBox="0 0 18 18" stroke="#5a5c5f" strokeWidth="2.800"><path d="M1.500 1.500L16.500 16.500M16.500 1.500L1.500 16.500" /></svg>
        </ActiveTab>
        <NewTab>
          <svg width="24" height="24" viewBox="0 0 24 24" stroke="#4d4b45" strokeWidth="3.400"><path d="M12 0V24M0 12H24" /></svg>
        </NewTab>
        <WindowControls>
          <Control $w={54}><svg width="16" height="20" viewBox="0 0 16 20"><rect y="14" width="16" height="3" fill="#222" /></svg></Control>
          <Control $w={52}>
            <svg width="18" height="16" viewBox="0 0 18 16" fill="none" stroke="#222" strokeWidth="2"><rect x="1" y="5" width="13" height="10" /><path d="M1 5.500H14" strokeWidth="3" /><path d="M4 1H17V12" /></svg>
          </Control>
          <Control $w={92} $close>
            <svg width="14" height="12" viewBox="0 0 14 12" stroke="#fff" strokeWidth="2.200"><path d="M1 0L13 12M13 0L1 12" /></svg>
          </Control>
        </WindowControls>
      </TabStrip>

      <Toolbar>
        <ToolButton><Arrow /></ToolButton>
        <ToolButton><Arrow flip /></ToolButton>
        <ToolButton><MdRefresh size={39} /></ToolButton>
        <Omnibox>
          <MdInfoOutline size={32} />
          <Scheme>File</Scheme>
          <Divider />
          <Address>file:///C:/Users/Shainy/GitHome/projects/movieApp/index.html</Address>
          <MdStarBorder size={34} />
        </Omnibox>
        <Extensions>
          <ToolButton><ChartExt /></ToolButton>
          <ToolButton><NoteExt /></ToolButton>
          <ToolButton><ShieldExt /></ToolButton>
          <ToolButton><CameraExt /></ToolButton>
          <ToolButton><TypeExt /></ToolButton>
          <ToolButton><BracesExt /></ToolButton>
          <ToolButton><AxExt /></ToolButton>
          <ToolButton $w={34}><Divider $color="#cfd1d4" /></ToolButton>
          <ToolButton $w={56}><MdAccountCircle size={41} /></ToolButton>
          <ToolButton $w={72}>
            <svg width="8" height="28" viewBox="0 0 8 28" fill="#5f6368"><circle cx="4" cy="4" r="3.200" /><circle cx="4" cy="14" r="3.200" /><circle cx="4" cy="24" r="3.200" /></svg>
          </ToolButton>
        </Extensions>
      </Toolbar>

      <Page>
        <Title>Movies <TitleTail>For You</TitleTail></Title>
        <Lead>Find movies recommended for you.</Lead>
        <SearchForm>
          <SearchInput placeholder="topic or movie title" />
          <SearchButton>Get movies</SearchButton>
        </SearchForm>
      </Page>

      <TaskbarRoot>
        <Wallpaper><Meadow /></Wallpaper>
        <StartButton><WindowsLogo /></StartButton>
        <TaskList>
          {tasks.map((t, i) => <TaskButton key={i} $state={t.state}>{t.icon}</TaskButton>)}
        </TaskList>
        <Tray>
          <TrayItem $w={59} $gap={42}><Keyboard /></TrayItem>
          <TrayItem $w={16} $gap={44} $drop={16}>
            <svg width="16" height="10" viewBox="0 0 16 10"><path d="M8 0L16 10H0Z" fill="#e8e8ee" /></svg>
          </TrayItem>
          <TrayItem $w={32} $gap={16} $drop={4}><Power /></TrayItem>
          <TrayItem $w={33} $gap={15} $drop={4}><Signal /></TrayItem>
          <TrayItem $w={32} $gap={9} $drop={6}><Volume /></TrayItem>
          <Clock>6:32 PM<br />11/24/2018</Clock>
        </Tray>
      </TaskbarRoot>
    </Screen>
  );
}
